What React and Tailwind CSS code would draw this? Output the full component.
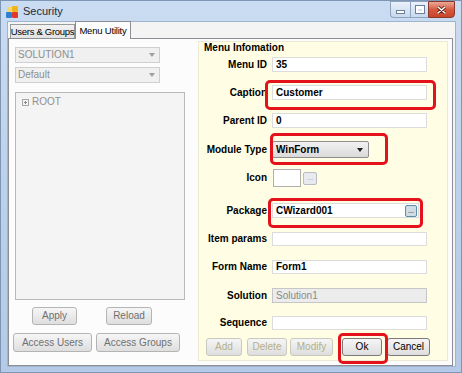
import React from 'react';

function WinButton({ children, className = '', disabled = false, muted = false }) {
  return (
    <div
      className={`flex items-center justify-center whitespace-nowrap rounded-[3px] border bg-gradient-to-b from-[#f6f6f6] to-[#dedede] text-[10px] leading-none ${
        disabled ? 'border-[#c9c9c0] text-[#b3b18a]' : muted ? 'border-[#b4b4b4] text-[#707070]' : 'border-[#7a7a7a] text-black'
      } ${className}`}
    >
      {children}
    </div>
  );
}

function Field({ label, children, className = '' }) {
  return (
    <div className={`flex items-center ${className}`}>
      <div className="w-[68px] shrink-0 text-right text-[10px] font-bold leading-none text-black whitespace-nowrap">{label}</div>
      <div className="ml-[5px] flex h-full items-center">{children}</div>
    </div>
  );
}

function TextBox({ value = '', className = '', grayed = false }) {
  return (
    <div
      className={`flex h-full items-center border px-[3px] text-[10px] leading-none ${
        grayed ? 'border-[#c6c6c6] bg-[#ececec] text-[#8a8a8a]' : 'border-[#dcdcdc] bg-white font-bold text-black'
      } ${className}`}
    >
      {value}
    </div>
  );
}

function Combo({ value }) {
  return (
    <div className="flex h-[16px] w-[145px] items-center border border-[#cfcfcf] bg-[#f0f0f0] pl-[2px] pr-[4px] text-[10px] leading-none text-[#8e8e8e]">
      <span>{value}</span>
      <svg className="ml-auto" width="6" height="4" viewBox="0 0 6 4">
        <path d="M0 0h6L3 4z" fill="#a0a0a0" />
      </svg>
    </div>
  );
}

function RedMark({ className }) {
  return <div className={`pointer-events-none absolute rounded-[5px] border-[3px] border-[#e3121b] ${className}`} />;
}

export default function App() {
  return (
    <div className="relative flex h-[373px] w-[462px] flex-col overflow-hidden border border-[#7f96b3] bg-gradient-to-b from-[#cadcf1] via-[#bcd1ea] to-[#b4cae6] font-['Liberation_Sans',Arial,sans-serif]">
      {/* title bar */}
      <div className="flex h-[21px] shrink-0 items-start">
        <div className="flex h-[21px] items-center gap-[4px] pl-[5px]">
          <svg width="13" height="12" viewBox="0 0 13 12">
            <rect x="0" y="6" width="6" height="6" rx="1" fill="#2f7fd6" />
            <rect x="6" y="6" width="6" height="6" rx="1" fill="#e2382b" />
            <rect x="6" y="0" width="6" height="6" rx="1" fill="#f2b41c" />
            <rect x="1" y="1" width="5" height="5" rx="1" fill="#f6d86a" />
          </svg>
          <span className="text-[11px] leading-none text-[#1e2a3a]">Security</span>
        </div>
        <div className="ml-auto mr-[6px] flex h-[17px]">
          <div className="flex w-[20px] items-end justify-center rounded-bl-[4px] border border-r-0 border-[#8ea3bf] bg-gradient-to-b from-[#eaf1fa] to-[#c9d9ee] pb-[4px]">
            <div className="h-[2px] w-[7px] bg-white shadow-[0_0_0_1px_#6b7f9b]" />
          </div>
          <div className="flex w-[18px] items-center justify-center border border-r-0 border-[#8ea3bf] bg-gradient-to-b from-[#eaf1fa] to-[#c9d9ee]">
            <div className="h-[7px] w-[8px] border-[2px] border-t-[3px] border-white shadow-[0_0_0_1px_#6b7f9b]" />
          </div>
          <div className="flex w-[27px] items-center justify-center rounded-br-[4px] border border-[#8a3a2c] bg-gradient-to-b from-[#eaa896] via-[#d65a40] to-[#c9452a]">
            <svg width="9" height="8" viewBox="0 0 9 8">
              <path d="M1 1l7 6M8 1L1 7" stroke="#5a1f14" strokeWidth="3" strokeLinecap="round" />
              <path d="M1 1l7 6M8 1L1 7" stroke="#ffffff" strokeWidth="1.6" strokeLinecap="round" />
            </svg>
          </div>
        </div>
      </div>

      {/* client area */}
      <div className="ml-[7px] mr-[6px] flex flex-1 flex-col bg-[#f4f4f4] pr-[2px] shadow-[0_0_0_1px_#9fb4cf]">
        {/* tabs */}
        <div className="flex h-[16px] shrink-0 items-end pl-[2px]">
          <div className="flex h-[14px] w-[65px] items-center justify-center whitespace-nowrap border border-b-0 border-[#9a9a9a] bg-gradient-to-b from-[#f2f2f2] to-[#e2e2e2] text-[9.5px] tracking-[-0.3px] leading-none text-black">
            Users &amp; Groups
          </div>
          <div className="relative z-10 -mb-px flex h-[18px] w-[56px] items-center justify-center whitespace-nowrap border border-b-0 border-[#8c8e94] bg-[#fcfcfc] text-[9.5px] tracking-[-0.2px] leading-none text-black">
            Menu Utility
          </div>
        </div>

        {/* tab page */}
        <div className="flex h-[328px] border border-[#8c8e94] bg-[#fcfcfc] pl-[6px]">
          {/* left column */}
          <div className="flex w-[170px] shrink-0 flex-col pt-[8px]">
            <Combo value="SOLUTION1" />
            <div className="mt-[4px]">
              <Combo value="Default" />
            </div>
            <div className="mt-[9px] h-[208px] w-[170px] border border-[#b9b9b9] bg-[#f4f4f4] pl-[6px] pt-[4px]">
              <div className="flex items-center gap-[3px] text-[10px] leading-none text-[#909090]">
                <svg width="7" height="7" viewBox="0 0 7 7">
                  <rect x="0.5" y="0.5" width="6" height="6" fill="none" stroke="#a8a8a8" />
                  <path d="M2 3.5h3M3.5 2v3" stroke="#8a8a8a" />
                </svg>
                <span>ROOT</span>
              </div>
            </div>
            <div className="mt-[7px] flex h-[18px]">
              <WinButton muted className="ml-[17px] w-[45px]">Apply</WinButton>
              <WinButton muted className="ml-[29px] w-[46px]">Reload</WinButton>
            </div>
            <div className="mt-[8px] -ml-[2px] flex h-[19px]">
              <WinButton muted className="w-[79px]">Access Users</WinButton>
              <WinButton muted className="ml-[4px] w-[84px]">Access Groups</WinButton>
            </div>
          </div>

          {/* right panel */}
          <div className="relative mt-[2px] ml-[13px] flex h-[320px] w-[250px] shrink-0 flex-col border border-[#ecead2] bg-[#fffee4]">
            <div className="h-[12px] pl-[5px] text-[10px] font-bold leading-[12px] text-black">Menu Infomation</div>

            <Field label="Menu ID" className="mt-[3px] h-[15px]">
              <TextBox value="35" className="w-[155px]" />
            </Field>
            <Field label="Caption" className="mt-[13px] h-[15px]">
              <TextBox value="Customer" className="w-[155px]" />
            </Field>
            <Field label="Parent ID" className="mt-[13px] h-[15px]">
              <TextBox value="0" className="w-[155px]" />
            </Field>
            <Field label="Module Type" className="mt-[13px] h-[17px]">
              <div className="flex h-full w-[97px] items-center rounded-[2px] border border-[#8e8e8e] bg-gradient-to-b from-[#f2f2f2] to-[#dadada] pl-[3px] pr-[5px] text-[10px] font-bold leading-none text-black">
                <span>WinForm</span>
                <svg className="ml-auto" width="6" height="4" viewBox="0 0 6 4">
                  <path d="M0 0h6L3 4z" fill="#202020" />
                </svg>
              </div>
            </Field>
            <Field label="Icon" className="mt-[11px] h-[18px]">
              <div className="ml-[1px] h-[18px] w-[28px] border border-[#b0b0b0] bg-white" />
              <div className="ml-[2px] flex h-[13px] w-[14px] items-center justify-center rounded-[2px] border border-[#b8bcc4] bg-[#e8eaee] text-[8px] leading-none text-[#9aa0aa]">
                ...
              </div>
            </Field>
            <Field label="Package" className="mt-[16px] h-[15px]">
              <div className="flex h-full w-[147px] items-center border border-[#dcdcdc] bg-white pl-[3px] pr-[1px] text-[10px] font-bold leading-none text-black">
                <span>CWizard001</span>
                <div className="ml-auto flex h-[12px] w-[12px] items-center justify-center rounded-[2px] border border-[#5b8ea6] bg-[#cfdde6] text-[7px] leading-none text-[#5b7c8e]">
                  ...
                </div>
              </div>
            </Field>
            <Field label="Item params" className="mt-[14px] h-[14px]">
              <TextBox className="w-[155px]" />
            </Field>
            <Field label="Form Name" className="mt-[14px] h-[14px]">
              <TextBox value="Form1" className="w-[155px]" />
            </Field>
            <Field label="Solution" className="mt-[14px] h-[15px]">
              <TextBox value="Solution1" grayed className="w-[155px]" />
            </Field>
            <Field label="Sequence" className="mt-[13px] h-[14px]">
              <TextBox className="w-[155px]" />
            </Field>

            <div className="mt-[8px] flex h-[18px] pl-[7px]">
              <WinButton disabled className="w-[36px]">Add</WinButton>
              <WinButton disabled className="ml-[5px] w-[40px]">Delete</WinButton>
              <WinButton disabled className="ml-[3px] w-[43px]">Modify</WinButton>
              <WinButton className="ml-[9px] w-[40px]">Ok</WinButton>
              <WinButton className="ml-[5px] w-[43px]">Cancel</WinButton>
            </div>

            <RedMark className="left-[66px] top-[38px] h-[30px] w-[171px]" />
            <RedMark className="left-[71px] top-[91px] h-[32px] w-[118px]" />
            <RedMark className="left-[69px] top-[156px] h-[30px] w-[155px]" />
            <RedMark className="left-[139px] top-[291px] h-[31px] w-[50px]" />
          </div>
        </div>
      </div>
      <div className="h-[6px] shrink-0" />
    </div>
  );
}
